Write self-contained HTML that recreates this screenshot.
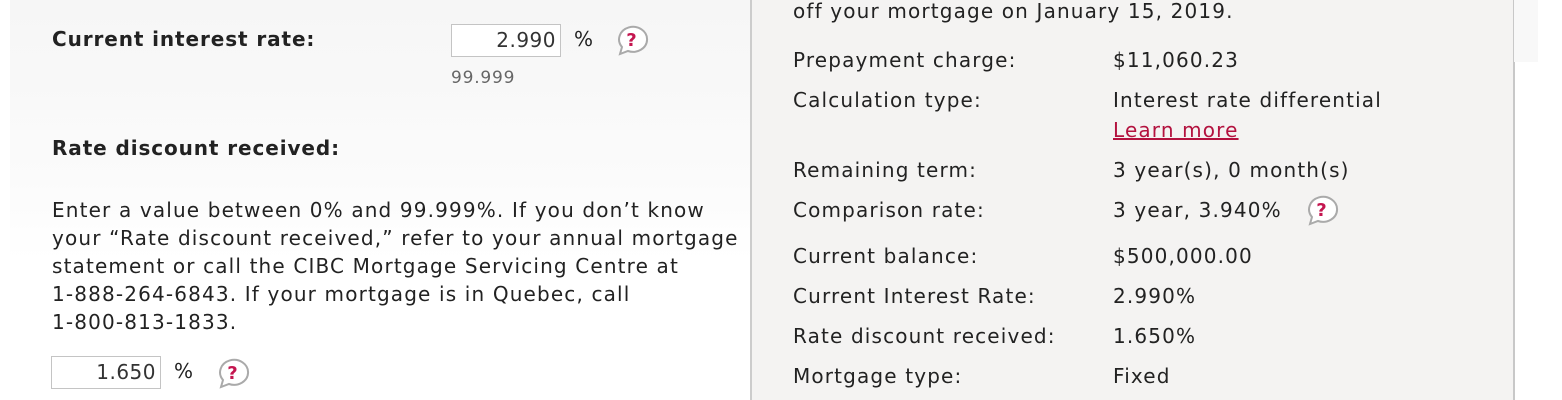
<!DOCTYPE html>
<html><head><style>
body{margin:0;width:1562px;height:400px;overflow:hidden;background:#fff;font-family:"DejaVu Sans","Liberation Sans",sans-serif;color:#222;font-size:20px;letter-spacing:1.15px;position:relative}
.a{position:absolute;white-space:nowrap;line-height:24px}
.b{font-weight:bold;letter-spacing:0.9px}
.left{position:absolute;left:10px;top:0;width:740px;height:400px;background:linear-gradient(#f6f6f6,#fbfbfb 180px,#fff 260px)}
.right{position:absolute;left:750px;top:0;width:761px;height:400px;background:#f4f3f2;border-left:2px solid #ccc;border-right:2px solid #c8c8c8}
.inp{position:absolute;background:#fff;border:1px solid #c4c4c4;height:33px;box-sizing:border-box;text-align:right;padding-right:4px;line-height:31px;font-size:20px;color:#333;letter-spacing:0.5px}
.q{position:absolute;width:34px;height:32px}
</style></head><body>
<div class="left"></div>
<div class="right"></div>
<div style="position:absolute;left:1514px;top:0;width:24px;height:62px;background:#f8f8f8"></div>

<div class="a b" style="left:52px;top:27px">Current interest rate:</div>
<div class="inp" style="left:451px;top:24px;width:110px">2.990</div>
<div class="a" style="left:574px;top:27px">%</div>
<svg class="q" style="left:615px;top:25px" viewBox="0 0 34 32"><path d="M5 29 L7 22 A14 12.5 0 1 1 13 26 Z" fill="#fff" stroke="#aaa" stroke-width="2"/><text x="17" y="21" text-anchor="middle" font-family="DejaVu Sans" font-weight="bold" font-size="18" fill="#c4154f">?</text></svg>
<div class="a" style="left:451px;top:66px;font-size:17px;color:#666;letter-spacing:0.8px">99.999</div>

<div class="a b" style="left:52px;top:136px">Rate discount received:</div>
<div class="a" style="left:52px;top:196px;line-height:28px;white-space:normal;width:720px">Enter a value between 0% and 99.999%. If you don’t know<br>your “Rate discount received,” refer to your annual mortgage<br>statement or call the CIBC Mortgage Servicing Centre at<br>1-888-264-6843. If your mortgage is in Quebec, call<br>1-800-813-1833.</div>
<div class="inp" style="left:51px;top:356px;width:110px">1.650</div>
<div class="a" style="left:174px;top:359px">%</div>
<svg class="q" style="left:216px;top:358px" viewBox="0 0 34 32"><path d="M5 29 L7 22 A14 12.5 0 1 1 13 26 Z" fill="#fff" stroke="#aaa" stroke-width="2"/><text x="17" y="21" text-anchor="middle" font-family="DejaVu Sans" font-weight="bold" font-size="18" fill="#c4154f">?</text></svg>

<div class="a" style="left:793px;top:-1px">off your mortgage on January 15, 2019.</div>
<div class="a" style="left:793px;top:48px">Prepayment charge:</div><div class="a" style="left:1113px;top:48px">$11,060.23</div>
<div class="a" style="left:793px;top:88px">Calculation type:</div><div class="a" style="left:1113px;top:88px">Interest rate differential</div>
<div class="a" style="left:1113px;top:118px;color:#b3123f;text-decoration:underline">Learn more</div>
<div class="a" style="left:793px;top:158px">Remaining term:</div><div class="a" style="left:1113px;top:158px">3 year(s), 0 month(s)</div>
<div class="a" style="left:793px;top:198px">Comparison rate:</div><div class="a" style="left:1113px;top:198px">3 year, 3.940%</div>
<svg class="q" style="left:1305px;top:195px" viewBox="0 0 34 32"><path d="M5 29 L7 22 A14 12.5 0 1 1 13 26 Z" fill="#fff" stroke="#aaa" stroke-width="2"/><text x="17" y="21" text-anchor="middle" font-family="DejaVu Sans" font-weight="bold" font-size="18" fill="#c4154f">?</text></svg>
<div class="a" style="left:793px;top:244px">Current balance:</div><div class="a" style="left:1113px;top:244px">$500,000.00</div>
<div class="a" style="left:793px;top:284px">Current Interest Rate:</div><div class="a" style="left:1113px;top:284px">2.990%</div>
<div class="a" style="left:793px;top:324px">Rate discount received:</div><div class="a" style="left:1113px;top:324px">1.650%</div>
<div class="a" style="left:793px;top:364px">Mortgage type:</div><div class="a" style="left:1113px;top:364px">Fixed</div>
</body></html>
